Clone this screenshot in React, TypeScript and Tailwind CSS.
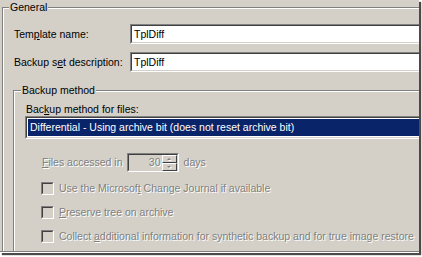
import React from "react";

const dis = "text-[#808080] [text-shadow:1px_1px_0_#ffffff]";

function Sunken({ className = "", inner = "", children }: { className?: string; inner?: string; children?: React.ReactNode }) {
  return (
    <div className={`border border-t-[#808080] border-l-[#808080] border-b-white border-r-white ${className}`}>
      <div className={`h-full border border-t-[#404040] border-l-[#404040] border-b-[#d4d0c8] border-r-[#d4d0c8] ${inner}`}>
        {children}
      </div>
    </div>
  );
}

function Check({ label }: { label: React.ReactNode }) {
  return (
    <div className="flex items-center h-[13px]">
      <Sunken className="w-[13px] h-[13px] shrink-0" inner="bg-[#d4d0c8]" />
      <span className={`ml-[5px] whitespace-nowrap ${dis}`}>{label}</span>
    </div>
  );
}

function Arrow({ up }: { up?: boolean }) {
  return (
    <svg width="7" height="4" viewBox="0 0 7 4" className="block">
      {up ? (
        <>
          <path d="M2 4 L4 2 L6 4 Z" fill="#ffffff" />
          <path d="M1 3 L3 1 L5 3 Z" fill="#808080" />
        </>
      ) : (
        <>
          <path d="M2 2 L6 2 L4 4 Z" fill="#ffffff" />
          <path d="M1 1 L5 1 L3 3 Z" fill="#808080" />
        </>
      )}
    </svg>
  );
}

function SpinBtn({ up }: { up?: boolean }) {
  return (
    <div className="h-[8px] w-[15px] border border-t-white border-l-white border-b-[#404040] border-r-[#404040] bg-[#d4d0c8] flex items-center justify-center">
      <Arrow up={up} />
    </div>
  );
}

export default function App() {
  return (
    <div className="w-[422px] h-[257px] bg-white font-['Liberation_Sans',Arial,sans-serif] text-[10.5px] leading-[13px] text-black">
      <div className="w-[419px] h-[253px] bg-[#d4d0c8] shadow-[2px_2px_1px_#4a4a4a] flex flex-col overflow-hidden">
        <div className="h-[251px] overflow-hidden pl-[2px] pt-[7px]">
          {/* General group */}
          <div className="relative w-[480px] h-[300px] border-t border-l border-[#808080] shadow-[inset_1px_1px_0_#ffffff]">
            <span className="absolute -top-[7px] left-[6px] px-[1px] bg-[#d4d0c8]">General</span>

            <div className="flex items-center h-[20px] mt-[16px]">
              <span className="w-[116px] ml-[11px] whitespace-nowrap">
                Tem<span className="underline">p</span>late name:
              </span>
              <Sunken className="w-[320px] h-[20px]" inner="bg-white flex items-center pl-[2px]">
                TplDiff
              </Sunken>
            </div>

            <div className="flex items-center h-[20px] mt-[8px]">
              <span className="w-[116px] ml-[11px] whitespace-nowrap">
                Backup s<span className="underline">e</span>t description:
              </span>
              <Sunken className="w-[320px] h-[20px]" inner="bg-white flex items-center pl-[2px]">
                TplDiff
              </Sunken>
            </div>

            {/* Backup method group */}
            <div className="relative ml-[10px] mt-[18px] w-[460px] h-[200px] border-t border-l border-[#808080] shadow-[inset_1px_1px_0_#ffffff]">
              <span className="absolute -top-[7px] left-[7px] px-[1px] bg-[#d4d0c8]">Backup method</span>

              <div className="ml-[12px] mt-[12px] whitespace-nowrap">
                Bac<span className="underline">k</span>up method for files:
              </div>

              <Sunken className="ml-[11px] w-[420px] h-[23px]" inner="bg-white p-[1px]">
                <div className="h-full bg-[#0a246a] text-white flex items-center pl-[2px] whitespace-nowrap">
                  Differential - Using archive bit (does not reset archive bit)
                </div>
              </Sunken>

              <div className="flex items-center ml-[28px] mt-[14px] h-[19px]">
                <span className={`whitespace-nowrap ${dis}`}>
                  <span className="underline">F</span>iles accessed in
                </span>
                <Sunken className="ml-[4px] w-[52px] h-[19px]" inner="bg-[#d4d0c8] flex items-center">
                  <span className={`flex-1 text-right pr-[1px] ${dis}`}>30</span>
                  <div className="flex flex-col">
                    <SpinBtn up />
                    <SpinBtn />
                  </div>
                </Sunken>
                <span className={`ml-[5px] ${dis}`}>days</span>
              </div>

              <div className="ml-[27px] mt-[10px] flex flex-col gap-[11px]">
                <Check label={<>Use the Microsof<span className="underline">t</span> Change Journal if available</>} />
                <Check label={<><span className="underline">P</span>reserve tree on archive</>} />
                <Check
                  label={
                    <>
                      Collect <span className="underline">a</span>dditional information for synthetic backup and for true image restore
                    </>
                  }
                />
              </div>
            </div>
          </div>
        </div>
        <div className="h-[1px] bg-[#808080]" />
        <div className="h-[1px] bg-white" />
      </div>
    </div>
  );
}
